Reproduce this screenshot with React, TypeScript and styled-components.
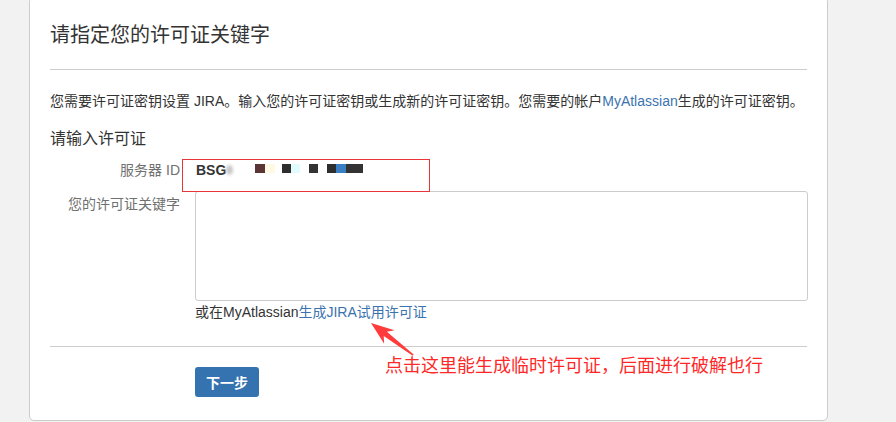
import React from "react";
import styled, { createGlobalStyle } from "styled-components";

const GlobalStyle = createGlobalStyle`
  html, body {
    margin: 0;
    padding: 0;
    background: #f2f2f2;
  }
  body {
    font-family: "Liberation Sans", "Noto Sans CJK SC", sans-serif;
    color: #333333;
    overflow: hidden;
  }
`;

const Page = styled.div`
  width: 896px;
  height: 422px;
  overflow: hidden;
`;

const Card = styled.div`
  position: relative;
  box-sizing: border-box;
  width: 799px;
  height: 424px;
  margin: -3px 0 0 29px;
  padding: 22px 20px 0 20px;
  background: #ffffff;
  border: 1px solid #cccccc;
  border-radius: 5px;
`;

const Title = styled.h2`
  margin: 0;
  font-size: 20px;
  line-height: 30px;
  font-weight: normal;
  color: #333333;
  padding-bottom: 19px;
  border-bottom: 1px solid #cccccc;
`;

const Intro = styled.p`
  margin: 21px 0 0 0;
  font-size: 14px;
  line-height: 20px;
`;

const Link = styled.span`
  color: #3b73af;
`;

const SubTitle = styled.h3`
  margin: 17px 0 0 0;
  font-size: 16px;
  line-height: 22px;
  font-weight: normal;
`;

const Field = styled.div<{ $top: number }>`
  display: grid;
  grid-template-columns: 130px 1fr;
  column-gap: 15px;
  margin-top: ${(p) => p.$top}px;
`;

const Label = styled.label<{ $pad?: number }>`
  text-align: right;
  font-size: 14px;
  line-height: 20px;
  color: #707070;
  padding-top: ${(p) => p.$pad ?? 0}px;
`;

const Value = styled.div`
  display: flex;
  align-items: center;
  height: 20px;
  padding-left: 1px;
  font-size: 14px;
  font-weight: bold;
  color: #333333;
`;

const Blur = styled.span`
  display: inline-block;
  width: 7px;
  height: 10px;
  border-radius: 50%;
  background: #c8c8c8;
  filter: blur(1.5px);
`;

const Pixel = styled.span<{ $w: number; $c: string; $gap: number }>`
  display: inline-block;
  width: ${(p) => p.$w}px;
  height: 9px;
  margin-left: ${(p) => p.$gap}px;
  margin-top: -4px;
  background: ${(p) => p.$c};
`;

const TextArea = styled.textarea`
  display: block;
  box-sizing: border-box;
  width: 613px;
  height: 110px;
  margin: 0;
  border: 1px solid #cccccc;
  border-radius: 3px;
  resize: none;
  outline: none;
  font-family: inherit;
`;

const Hint = styled.div`
  margin-top: 1px;
  font-size: 14px;
  line-height: 20px;
  color: #333333;
`;

const Divider = styled.div`
  margin-top: 24px;
  border-top: 1px solid #cccccc;
`;

const Actions = styled.div`
  padding: 20px 0 0 145px;
`;

const Button = styled.button`
  display: block;
  width: 64px;
  height: 30px;
  border: none;
  border-radius: 3px;
  background: #3572b0;
  color: #ffffff;
  font-family: inherit;
  font-size: 14px;
  font-weight: bold;
  cursor: pointer;
`;

/* screenshot annotations drawn over the form */
const RedBox = styled.div`
  position: absolute;
  left: 152px;
  top: 161px;
  width: 248px;
  height: 33px;
  box-sizing: border-box;
  border: 1px solid #e8353a;
`;

const Note = styled.div`
  position: absolute;
  left: 355px;
  top: 356px;
  font-size: 18px;
  line-height: 24px;
  color: #ff2828;
  white-space: nowrap;
`;

const ArrowSvg = styled.svg`
  position: absolute;
  left: 335px;
  top: 317px;
`;

const pixels = [
  { w: 10, c: "#5b3535", gap: 22 },
  { w: 10, c: "#fff9e4", gap: 0 },
  { w: 9, c: "#2e2e2e", gap: 7 },
  { w: 9, c: "#e0fcfc", gap: 0 },
  { w: 9, c: "#333333", gap: 9 },
  { w: 9, c: "#2e2e2e", gap: 9 },
  { w: 10, c: "#3a7fc4", gap: 0 },
  { w: 17, c: "#333333", gap: 0 },
];

function Arrow() {
  return (
    <ArrowSvg width="60" height="48" viewBox="0 0 60 48">
      <g transform="translate(6 8) rotate(37.3)">
        <polygon
          points="0,0 23,-8.5 18,-2.6 53,-0.8 53,0.8 18,2.6 23,8.5"
          fill="#ff3b3b"
        />
      </g>
    </ArrowSvg>
  );
}

export default function App() {
  return (
    <Page>
      <GlobalStyle />
      <Card>
        <Title>请指定您的许可证关键字</Title>
        <Intro>
          您需要许可证密钥设置 JIRA。输入您的许可证密钥或生成新的许可证密钥。您需要的帐户
          <Link>MyAtlassian</Link>生成的许可证密钥。
        </Intro>
        <SubTitle>请输入许可证</SubTitle>
        <Field $top={10}>
          <Label>服务器 ID</Label>
          <Value>
            BSG
            <Blur />
            {pixels.map((p, i) => (
              <Pixel key={i} $w={p.w} $c={p.c} $gap={p.gap} />
            ))}
          </Value>
        </Field>
        <Field $top={11}>
          <Label $pad={3}>您的许可证关键字</Label>
          <div>
            <TextArea />
            <Hint>
              或在MyAtlassian<Link>生成JIRA试用许可证</Link>
            </Hint>
          </div>
        </Field>
        <Divider />
        <Actions>
          <Button>下一步</Button>
        </Actions>
        <RedBox />
        <Arrow />
        <Note>点击这里能生成临时许可证，后面进行破解也行</Note>
      </Card>
    </Page>
  );
}
